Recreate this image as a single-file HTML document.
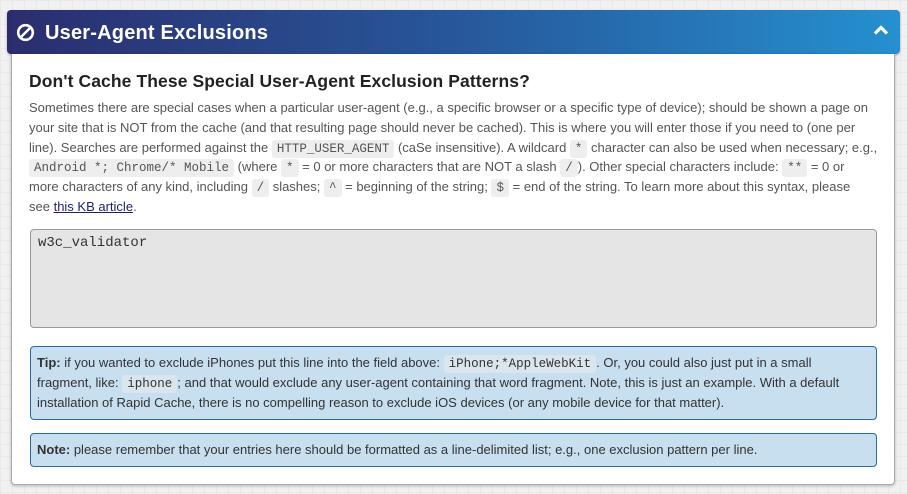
<!DOCTYPE html>
<html><head><meta charset="utf-8"><style>
*{box-sizing:border-box;margin:0;padding:0}
body{width:907px;height:494px;overflow:hidden;background:#f1f1f1;
background-image:linear-gradient(#e9e9e9 1px,transparent 1px),linear-gradient(90deg,#e9e9e9 1px,transparent 1px);background-size:12px 12px;
font-family:"Liberation Sans","DejaVu Sans",sans-serif;color:#555;position:relative}
.hdr{position:absolute;left:7px;top:10px;width:893px;height:44px;border-radius:4px;
background:linear-gradient(90deg,#2b2d6e 0%,#27579a 50%,#2590d0 100%);box-shadow:0 1px 2px rgba(0,0,0,.3)}
.hdr .t{position:absolute;left:38px;top:12px;color:#fff;font-weight:bold;font-size:20px;letter-spacing:.2px}
.panel{position:absolute;left:11px;top:54px;width:884px;height:431px;background:#fff;border:1px solid #aaa;border-top:none;border-radius:0 0 4px 4px;box-shadow:0 1px 3px rgba(0,0,0,.25)}
h2{position:absolute;left:29px;top:71px;font-size:17.5px;color:#222;font-weight:bold;letter-spacing:.1px}
.p{position:absolute;left:29px;top:98px;font-size:13px;line-height:19.8px;white-space:nowrap;color:#555}
.p>div,.box>div{height:19.8px}
code{font-family:"Liberation Mono",monospace;font-size:12.5px;line-height:14px;background:#eee;border-radius:3px;padding:2px 5px;color:#555}
a{color:#1f1f6e}
.ta{position:absolute;left:30px;top:229px;width:847px;height:99px;background:#e5e5e5;border:1px solid #999;border-radius:4px;padding:5px 7px;font-family:"Liberation Mono",monospace;font-size:14px;color:#333}
.box{position:absolute;left:30px;width:847px;background:#c8dfef;border:1px solid #2a6aa0;border-radius:4px;padding:6px 6px;font-size:13px;line-height:19.8px;color:#333;white-space:nowrap}
.box code{background:#dbe5ec;color:#333}
</style></head><body>
<div class="hdr">
<svg style="position:absolute;left:9px;top:13px" width="19" height="19" viewBox="0 0 19 19"><circle cx="9.5" cy="9.5" r="7.3" fill="none" stroke="#fff" stroke-width="2.6"/><line x1="4.5" y1="14.5" x2="14.5" y2="4.5" stroke="#fff" stroke-width="2.6"/></svg>
<div class="t">User-Agent Exclusions</div>
<svg style="position:absolute;left:866px;top:14px" width="16" height="12" viewBox="0 0 16 12"><polyline points="2,9.5 8,3.5 14,9.5" fill="none" stroke="#fff" stroke-width="3.2"/></svg>
</div>
<div class="panel"></div>
<h2>Don't Cache These Special User-Agent Exclusion Patterns?</h2>
<div class="p">
<div>Sometimes there are special cases when a particular user-agent (e.g., a specific browser or a specific type of device); should be shown a page on</div>
<div>your site that is NOT from the cache (and that resulting page should never be cached). This is where you will enter those if you need to (one per</div>
<div>line). Searches are performed against the <code>HTTP_USER_AGENT</code> (caSe insensitive). A wildcard <code>*</code> character can also be used when necessary; e.g.,</div>
<div><code>Android *; Chrome/* Mobile</code> (where <code>*</code> = 0 or more characters that are NOT a slash <code>/</code>). Other special characters include: <code>**</code> = 0 or</div>
<div>more characters of any kind, including <code>/</code> slashes; <code>^</code> = beginning of the string; <code>$</code> = end of the string. To learn more about this syntax, please</div>
<div>see <a href="#">this KB article</a>.</div>
</div>
<div class="ta">w3c_validator</div>
<div class="box" style="top:346px;height:74px">
<div><b>Tip:</b> if you wanted to exclude iPhones put this line into the field above: <code>iPhone;*AppleWebKit</code>. Or, you could also just put in a small</div>
<div>fragment, like: <code>iphone</code>; and that would exclude any user-agent containing that word fragment. Note, this is just an example. With a default</div>
<div>installation of Rapid Cache, there is no compelling reason to exclude iOS devices (or any mobile device for that matter).</div>
</div>
<div class="box" style="top:433px;height:34px">
<div><b>Note:</b> please remember that your entries here should be formatted as a line-delimited list; e.g., one exclusion pattern per line.</div>
</div>
</body></html>
